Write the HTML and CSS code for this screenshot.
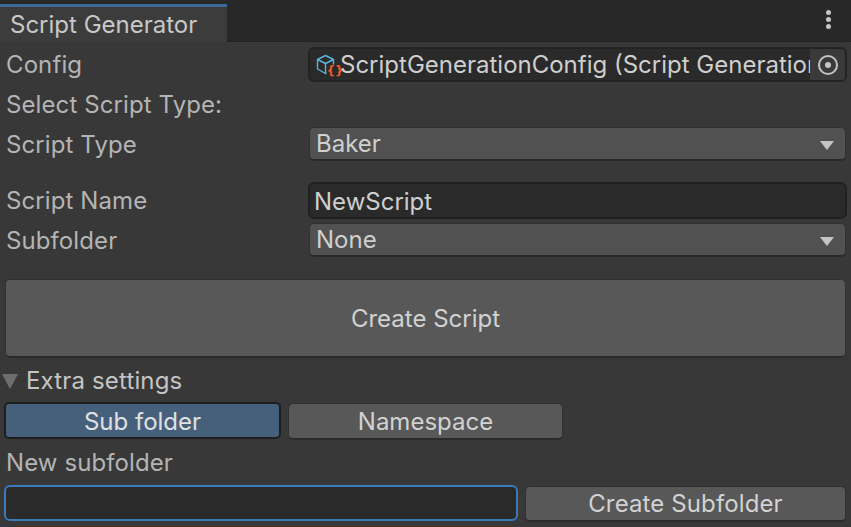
FILE: index.html
```html
<!DOCTYPE html>
<html lang="en">
<head>
    <meta charset="UTF-8">
    <meta name="viewport" content="width=device-width, initial-scale=1.0">
    <title>Script Generator</title>
    <link rel="stylesheet" href="styles.css">
</head>
<body>
    <div class="tabbar">
        <div class="tab">Script Generator</div>
        <div class="menu"><span></span><span></span><span></span></div>
    </div>

    <main class="panel">
        <div class="row row-config">
            <label class="label">Config</label>
            <div class="objectfield">
                <svg class="asset-icon" width="24" height="26" viewBox="0 0 24 26" fill="none">
                    <path d="M9.5 3.5 17.5 7.5V12.5M9.5 3.5 1.5 7.5V17L9.5 21.5 10.5 21M1.5 7.5 9.5 11.5 17.5 7.5M9.5 11.5V21.5" stroke="#5fb4dc" stroke-width="1.4" stroke-linejoin="round"/>
                    <text x="10.5" y="22.5" class="braces">{}</text>
                </svg>
                <span class="objectname">ScriptGenerationConfig (Script Generation Config)</span>
                <span class="picker"><i></i></span>
            </div>
        </div>
        <div class="label row-select">Select Script Type:</div>
        <div class="row row-type">
            <label class="label">Script Type</label>
            <div class="dropdown">Baker<b class="arrow"></b></div>
        </div>
        <div class="row row-name">
            <label class="label">Script Name</label>
            <div class="textfield">NewScript</div>
        </div>
        <div class="row row-sub">
            <label class="label">Subfolder</label>
            <div class="dropdown">None<b class="arrow"></b></div>
        </div>

        <button class="btn btn-create">Create Script</button>

        <div class="foldout"><b class="fold-arrow"></b>Extra settings</div>

        <div class="tabs">
            <button class="btn btn-active">Sub folder</button>
            <button class="btn">Namespace</button>
        </div>

        <div class="label row-new">New subfolder</div>
        <div class="row-add">
            <div class="textfield focused"></div>
            <button class="btn">Create Subfolder</button>
        </div>
    </main>
</body>
</html>
```

FILE: styles.css
```css
* { box-sizing: border-box; }
html, body { height: 100%; }
body { margin: 0; overflow: hidden; background: #383838; color: #c4c4c4; font-family: Inter, "Liberation Sans", sans-serif; font-size: 24px; }

.tabbar { height: 42px; padding-top: 4px; background: #282828; border-bottom: 1px solid #232323; display: flex; justify-content: space-between; }
.tab { width: 227px; height: 38px; padding-left: 10px; background: #3c3c3c; border-top: 3px solid #3a6a9a; line-height: 36px; color: #c8c8c8; }
.menu { width: 45px; display: flex; flex-direction: column; align-items: center; gap: 2px; padding-top: 6px; }
.menu span { width: 5px; height: 5px; border-radius: 50%; background: #c4c4c4; }

.panel { padding: 5px 4px 0 5px; display: flex; flex-direction: column; }
.label { color: #b4b4b4; padding-left: 1px; letter-spacing: .1px; }
.row { display: grid; grid-template-columns: 303px 1fr; align-items: center; }

.row-config { height: 35px; }
.row-select { height: 30px; margin-top: 8px; line-height: 30px; }
.row-type { height: 34px; margin-top: 7px; }
.row-name { height: 37px; margin-top: 21px; }
.row-sub { height: 34px; margin-top: 4px; }

.objectfield { height: 35px; display: flex; align-items: center; background: #2a2a2a; border: 2px solid #232323; border-radius: 6px; padding-left: 6px; overflow: hidden; }
.asset-icon { flex: none; overflow: visible; }
.braces { fill: #f0592a; font-size: 12px; font-weight: 700; font-family: "DejaVu Sans", sans-serif; }
.objectname { flex: 1; white-space: nowrap; overflow: hidden; color: #cfcfcf; }
.picker { flex: none; width: 35px; height: 100%; background: #3a3a3a; display: flex; align-items: center; justify-content: center; }
.picker i { width: 20px; height: 20px; border: 2px solid #c4c4c4; border-radius: 50%; position: relative; }
.picker i::after { content: ""; position: absolute; left: 5px; top: 5px; width: 6px; height: 6px; border-radius: 50%; background: #c4c4c4; }

.dropdown { height: 34px; margin: 0 1px 0 1px; padding-left: 6px; line-height: 32px; background: #515151; border: 1px solid #303030; border-bottom: 2px solid #2a2a2a; border-radius: 5px; color: #cfcfcf; position: relative; }
.arrow { position: absolute; right: 11px; top: 13px; border-left: 7px solid transparent; border-right: 7px solid transparent; border-top: 9px solid #c4c4c4; }

.textfield { height: 37px; padding-left: 4px; line-height: 35px; background: #2a2a2a; border: 2px solid #212121; border-radius: 6px; color: #cfcfcf; }
.textfield.focused { border-color: #3a79bb; }

.btn { height: 37px; padding: 0; font: inherit; color: #d2d2d2; background: #585858; border: 1px solid #303030; border-bottom: 2px solid #2a2a2a; border-radius: 5px; }
.btn-create { height: 79px; margin: 22px 1px 0 0; }

.foldout { height: 24px; margin-top: 11px; margin-left: -3px; display: flex; align-items: center; color: #c4c4c4; line-height: 24px; letter-spacing: .15px; }
.fold-arrow { margin-right: 8px; border-left: 8.5px solid transparent; border-right: 8.5px solid transparent; border-top: 15px solid #6e6e6e; }

.tabs { display: grid; grid-template-columns: 277px 275px; gap: 7px; margin: 10px 0 0 -1px; align-items: start; }
.btn-active { height: 37px; margin-top: -1px; padding-top: 2px; background: #46607c; border: 2px solid #1e1e1e; color: #e0e0e0; }

.row-new { height: 30px; margin-top: 8px; line-height: 30px; }
.row-add { display: grid; grid-template-columns: 514px 321px; gap: 7px; margin-top: 7px; margin-left: -1px; align-items: start; }
.row-add .textfield { height: 36px; }
.row-add .btn { margin-top: 1px; height: 36px; letter-spacing: .12px; }
```
